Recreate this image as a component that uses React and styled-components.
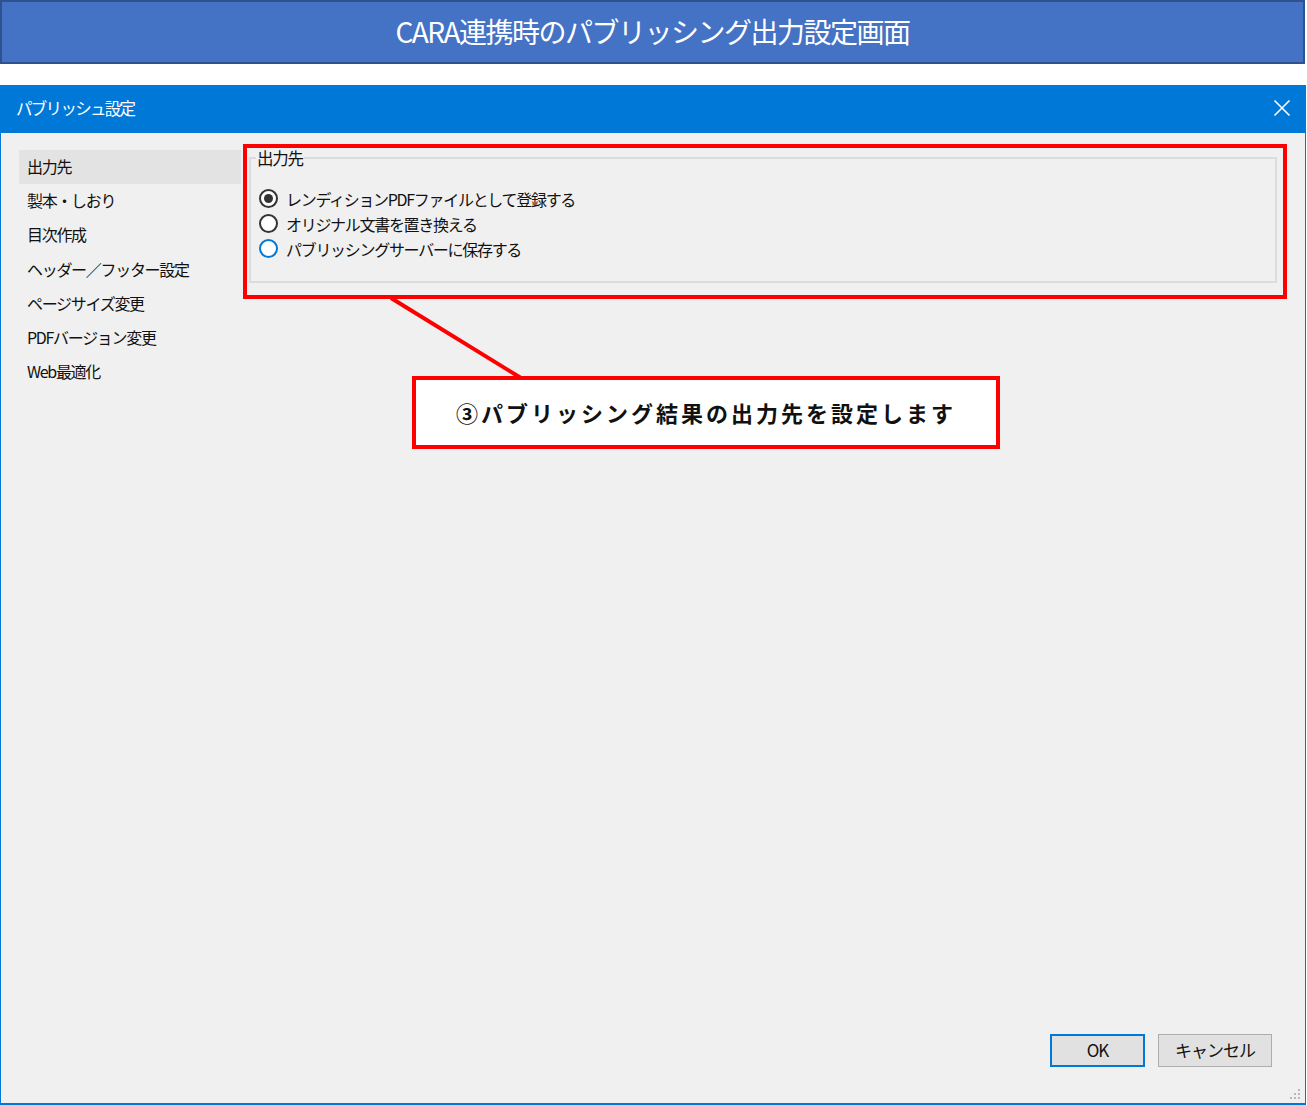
import React from "react";
import styled, { createGlobalStyle } from "styled-components";

const Global = createGlobalStyle`
  html, body {
    margin: 0;
    padding: 0;
    background: #ffffff;
  }
  body {
    font-family: "Noto Sans CJK JP", "Noto Sans", sans-serif;
  }
`;

const Page = styled.div`
  position: relative;
  width: 1307px;
  height: 1105px;
  display: flex;
  flex-direction: column;
  overflow: hidden;
`;

const Banner = styled.div`
  box-sizing: border-box;
  width: 1305px;
  height: 64px;
  background: #4472c4;
  border: 2px solid #2f528f;
  display: flex;
  align-items: center;
  justify-content: center;
  color: #ffffff;
  font-size: 28px;
  letter-spacing: -1.5px;
  padding-bottom: 2px;
`;

const Dialog = styled.div`
  box-sizing: border-box;
  margin-top: 21px;
  width: 1306px;
  flex: 1;
  display: flex;
  flex-direction: column;
  border: 1px solid #0078d7;
  border-top: none;
  border-bottom-width: 2px;
`;

const TitleBar = styled.div`
  box-sizing: border-box;
  height: 48px;
  background: #0078d7;
  display: flex;
  align-items: center;
  justify-content: space-between;
  padding: 0 14px 2px 15px;
  color: #ffffff;
  font-size: 16.5px;
  letter-spacing: -1.7px;
`;

const CloseIcon = () => (
  <svg width="18" height="18" viewBox="0 0 18 18">
    <path d="M1.5 1.5 L16.5 16.5 M16.5 1.5 L1.5 16.5" stroke="#ffffff" strokeWidth="1.6" />
  </svg>
);

const Body = styled.div`
  position: relative;
  flex: 1;
  background: #f0f0f0;
  border-left: 1px solid #ffffff;
  display: flex;
  flex-direction: column;
`;

const Main = styled.div`
  display: grid;
  grid-template-columns: 222px 1028px;
  column-gap: 8px;
  padding: 17px 0 0 17px;
  align-items: start;
`;

const Sidebar = styled.ul`
  list-style: none;
  margin: 0;
  padding: 0;
`;

const NavItem = styled.li`
  box-sizing: border-box;
  height: 34.3px;
  display: flex;
  align-items: center;
  padding: 0 0 3px 8px;
  font-size: 16px;
  letter-spacing: -1.3px;
  color: #111111;
  background: ${(p) => (p.$active ? "#e3e3e3" : "transparent")};
`;

const Group = styled.fieldset`
  margin: -2px 0 0 0;
  padding: 18px 0 20px 8px;
  border: 2px solid #dcdcdc;
  min-width: 0;
`;

const Legend = styled.legend`
  padding: 0 1px;
  margin-left: -3px;
  font-size: 16.5px;
  letter-spacing: -1.2px;
  color: #111111;
  line-height: 20px;
`;

const RadioRow = styled.label`
  display: flex;
  align-items: center;
  height: 25px;
  gap: 8px;
  font-size: 16px;
  letter-spacing: -1.3px;
  color: #111111;
`;

const RadioCircle = styled.span`
  box-sizing: border-box;
  flex: none;
  width: 19px;
  height: 19px;
  border-radius: 50%;
  background: #ffffff;
  border: 2px solid ${(p) => (p.$focus ? "#0078d7" : "#333333")};
  display: flex;
  align-items: center;
  justify-content: center;
  &::after {
    content: "";
    width: 9px;
    height: 9px;
    border-radius: 50%;
    background: ${(p) => (p.$checked ? "#333333" : "transparent")};
  }
`;

const Footer = styled.div`
  margin-top: auto;
  display: flex;
  justify-content: flex-end;
  gap: 13px;
  padding: 0 33px 36px 0;
`;

const Button = styled.button`
  box-sizing: border-box;
  width: ${(p) => p.$w}px;
  height: 33px;
  background: #e1e1e1;
  border: ${(p) => (p.$default ? "2px solid #0078d7" : "1px solid #adadad")};
  font-family: "Noto Sans CJK JP", "Noto Sans", sans-serif;
  font-size: 17px;
  letter-spacing: -1px;
  color: #111111;
  padding: 0 0 2px 0;
`;

const Grip = styled.svg`
  position: absolute;
  right: 4px;
  bottom: 3px;
`;

const Highlight = styled.div`
  position: absolute;
  left: 243px;
  top: 144px;
  width: 1044px;
  height: 155px;
  box-sizing: border-box;
  border: 4px solid #ff0000;
`;

const Leader = styled.svg`
  position: absolute;
  left: 0;
  top: 0;
  pointer-events: none;
`;

const Callout = styled.div`
  position: absolute;
  left: 412px;
  top: 376px;
  width: 588px;
  height: 73px;
  box-sizing: border-box;
  border: 4px solid #ff0000;
  background: #ffffff;
  display: flex;
  align-items: center;
  justify-content: center;
  font-size: 22px;
  font-weight: 700;
  letter-spacing: 3px;
  color: #111111;
  padding-bottom: 2px;
`;

const navItems = [
  "出力先",
  "製本・しおり",
  "目次作成",
  "ヘッダー／フッター設定",
  "ページサイズ変更",
  "PDFバージョン変更",
  "Web最適化",
];

const options = [
  { label: "レンディションPDFファイルとして登録する", checked: true },
  { label: "オリジナル文書を置き換える" },
  { label: "パブリッシングサーバーに保存する", focus: true },
];

export default function App() {
  return (
    <Page>
      <Global />
      <Banner>CARA連携時のパブリッシング出力設定画面</Banner>
      <Dialog>
        <TitleBar>
          <span>パブリッシュ設定</span>
          <CloseIcon />
        </TitleBar>
        <Body>
          <Main>
            <Sidebar>
              {navItems.map((n, i) => (
                <NavItem key={n} $active={i === 0}>
                  {n}
                </NavItem>
              ))}
            </Sidebar>
            <Group>
              <Legend>出力先</Legend>
              {options.map((o) => (
                <RadioRow key={o.label}>
                  <RadioCircle $checked={o.checked} $focus={o.focus} />
                  {o.label}
                </RadioRow>
              ))}
            </Group>
          </Main>
          <Footer>
            <Button $w={95} $default>
              OK
            </Button>
            <Button $w={114}>キャンセル</Button>
          </Footer>
          <Grip width="12" height="12" viewBox="0 0 12 12">
            {[
              [10, 2],
              [10, 6],
              [6, 6],
              [10, 10],
              [6, 10],
              [2, 10],
            ].map(([x, y]) => (
              <rect key={`${x}-${y}`} x={x - 1} y={y - 1} width="2" height="2" fill="#b8b8b8" />
            ))}
          </Grip>
        </Body>
      </Dialog>
      <Highlight />
      <Leader width="1307" height="1105">
        <line x1="391" y1="298" x2="521" y2="378" stroke="#ff0000" strokeWidth="4" />
      </Leader>
      <Callout>③パブリッシング結果の出力先を設定します</Callout>
    </Page>
  );
}
